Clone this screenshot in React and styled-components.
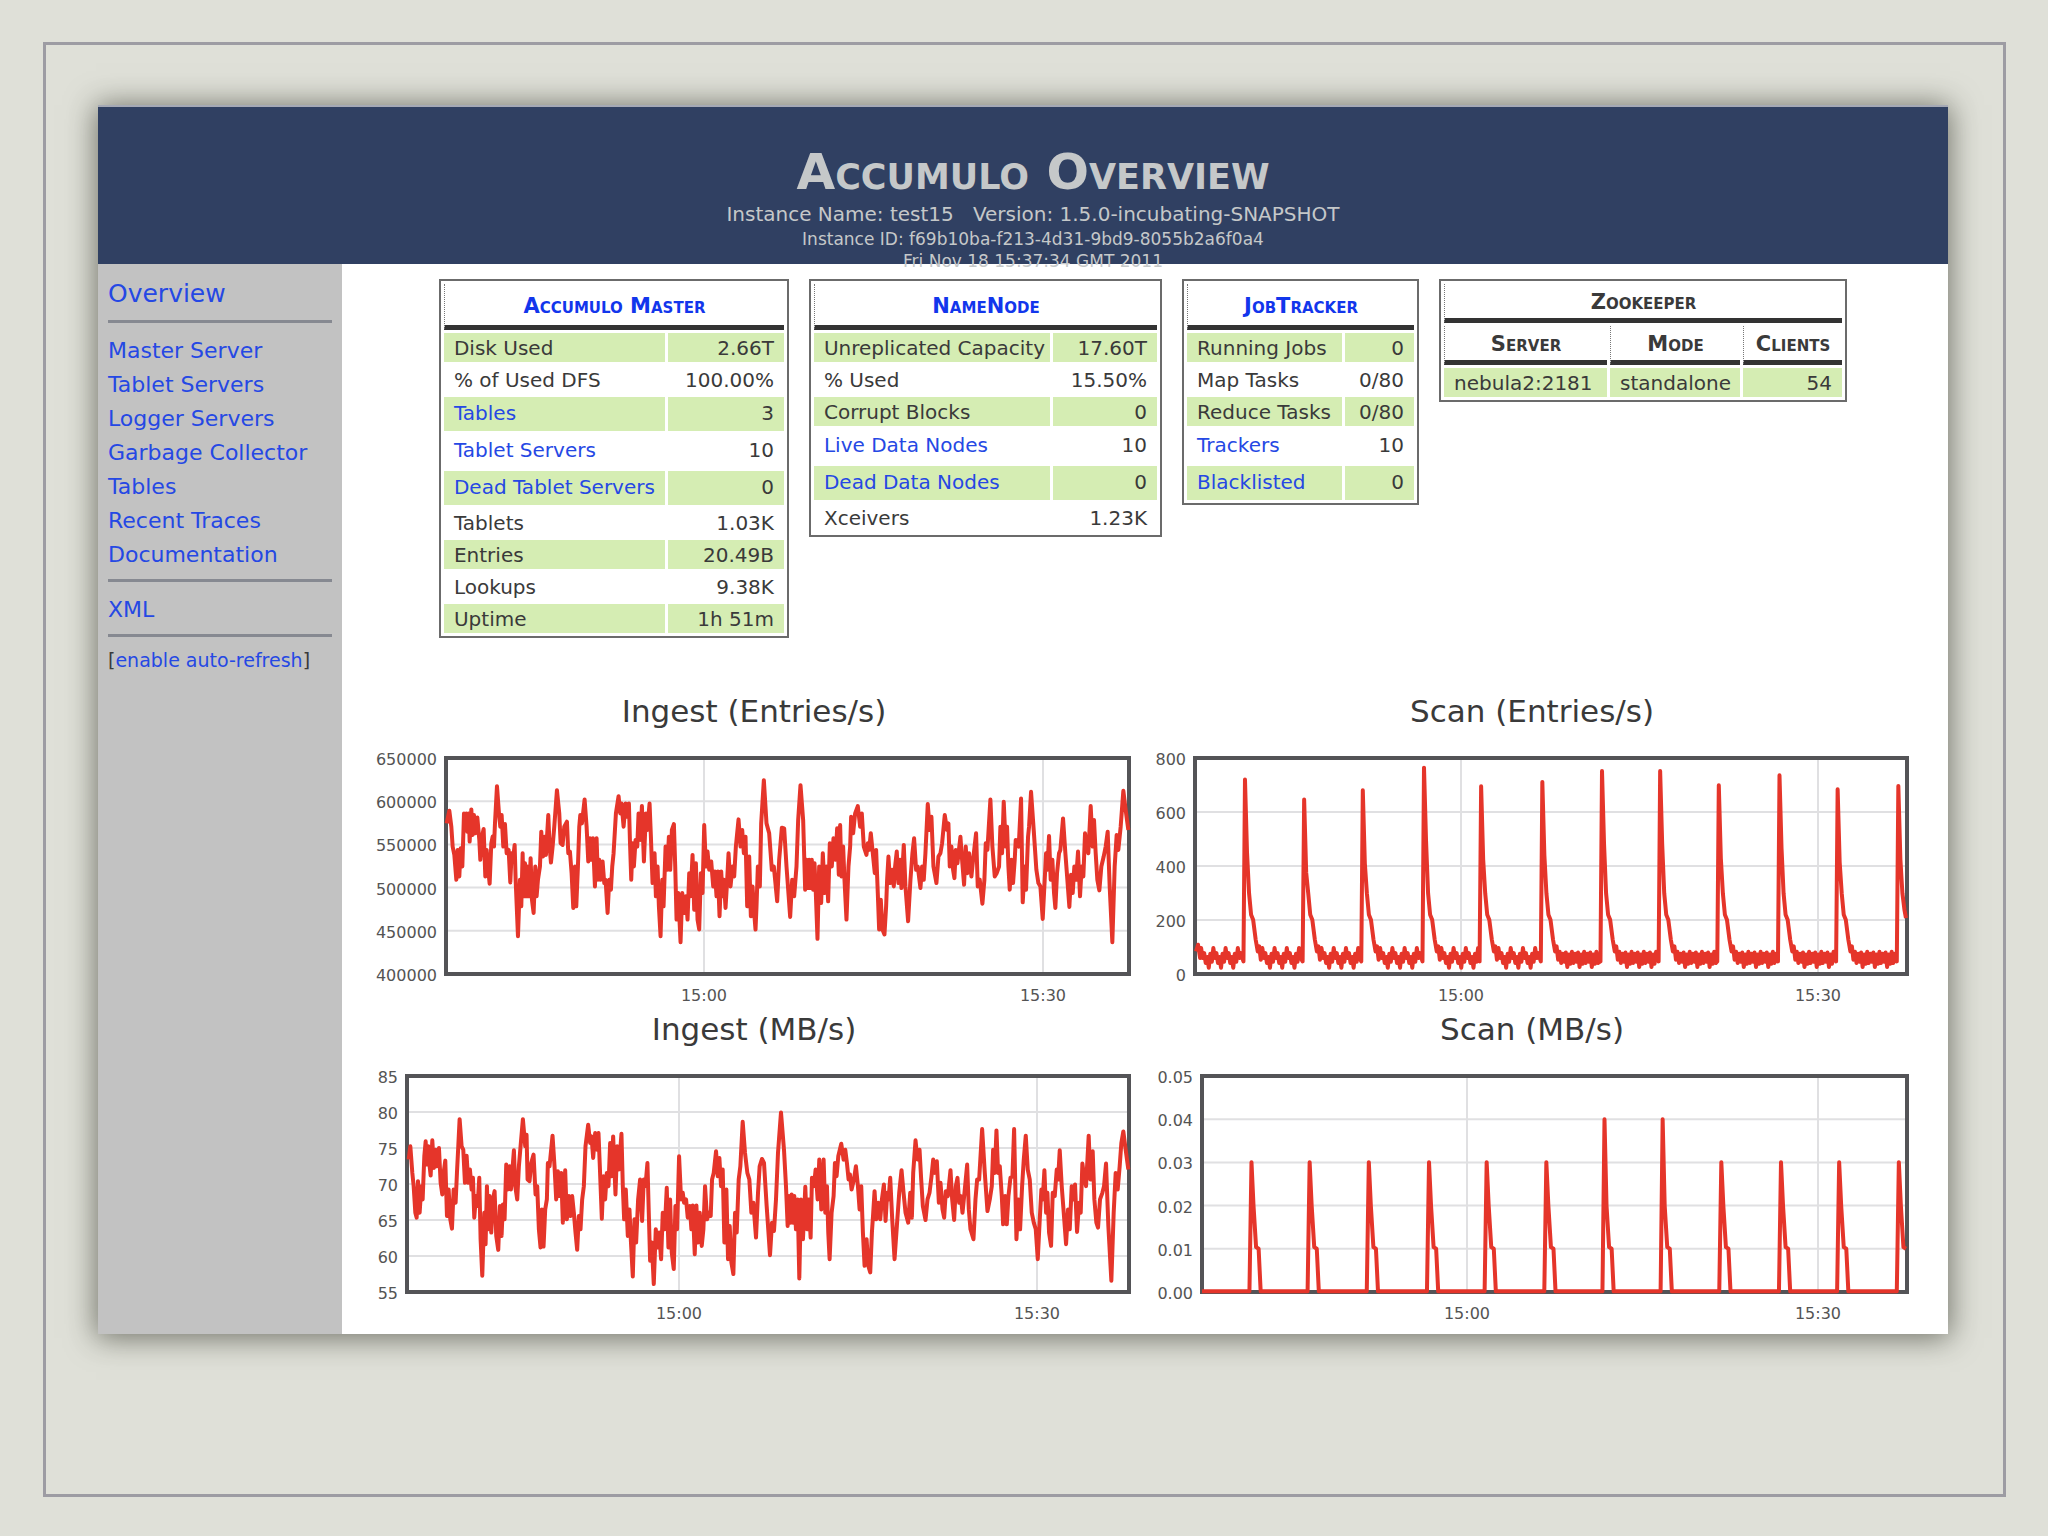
import React from "react";
import styled, { createGlobalStyle } from "styled-components";

const GlobalStyle = createGlobalStyle`
  * {
    box-sizing: border-box;
  }

  body {
    margin: 0;
    background: #dfe0d8;
    color: #3a3a3a;
    font-family: "DejaVu Sans", Verdana, sans-serif;
  }

  a {
    color: #2548e4;
    text-decoration: none;
  }
`;

const navLinks = [
  "Master Server",
  "Tablet Servers",
  "Logger Servers",
  "Garbage Collector",
  "Tables",
  "Recent Traces",
  "Documentation",
];

const summaries = [
  {
    title: "Accumulo Master",
    labelWidth: 221,
    valueWidth: 116,
    rows: [
      { label: "Disk Used", value: "2.66T" },
      { label: "% of Used DFS", value: "100.00%" },
      { label: "Tables", value: "3", link: true },
      { label: "Tablet Servers", value: "10", link: true },
      { label: "Dead Tablet Servers", value: "0", link: true },
      { label: "Tablets", value: "1.03K" },
      { label: "Entries", value: "20.49B" },
      { label: "Lookups", value: "9.38K" },
      { label: "Uptime", value: "1h 51m" },
    ],
  },
  {
    title: "NameNode",
    labelWidth: 236,
    valueWidth: 104,
    rows: [
      { label: "Unreplicated Capacity", value: "17.60T" },
      { label: "% Used", value: "15.50%" },
      { label: "Corrupt Blocks", value: "0" },
      { label: "Live Data Nodes", value: "10", link: true },
      { label: "Dead Data Nodes", value: "0", link: true },
      { label: "Xceivers", value: "1.23K" },
    ],
  },
  {
    title: "JobTracker",
    labelWidth: 155,
    valueWidth: 69,
    rows: [
      { label: "Running Jobs", value: "0" },
      { label: "Map Tasks", value: "0/80" },
      { label: "Reduce Tasks", value: "0/80" },
      { label: "Trackers", value: "10", link: true },
      { label: "Blacklisted", value: "0", link: true },
    ],
  },
];

// the ingest series come in two halves, the second one starts at HALF
const HALF = 1170;

const join = (first, second) => {
  const shifted = second
    .trim()
    .split(/\s+/)
    .map((p) => {
      const [x, y] = p.split(",").map(Number);
      return `${x + HALF},${y}`;
    });
  return `${first.trim()} ${shifted.join(" ")}`;
};

const ingestEntries = join(
  `260,430 268,392 274,440 278,500 283,525 289,600 293,510 298,590 302,505 307,560 312,400 315,450
  319,400 322,455 326,400 329,485 334,388 338,465 342,405 346,460 352,412 358,480 361,540 366,470
  371,447 376,590 380,510 384,560 389,612 394,490 398,470 402,500 405,430 411,318 417,400 421,440
  425,405 430,500 435,432 440,520 446,510 451,608 455,520 459,540 464,495 467,600 474,770 480,600
  484,680 488,520 491,650 495,550 499,650 503,560 507,650 512,535 516,660 521,700 526,560 530,650 534,600
  540,560 544,455 549,530 554,470 558,525 565,405 569,500 573,548 578,500 583,440 591,330 598,400
  602,490 608,495 613,440 621,425 625,520 630,515 635,580 640,685 645,560 649,680 654,560 658,440
  661,405 666,430 674,358 680,440 685,545 690,475 694,540 699,475 705,620 710,475 714,600 718,540
  722,600 728,545 733,610 737,600 743,700 748,600 753,630 757,560 761,520 768,400 776,348 781,400
  785,370 791,440 797,370 801,410 807,370 810,480 814,600 818,490 822,560 827,480 832,500 836,400
  841,480 846,378 849,460 852,545 858,400 862,450 869,370 873,470 878,610 884,520 888,650 893,560 897,680
  902,770 907,600 911,680 917,500 922,570 927,470 931,570 936,450 942,432 946,560 950,720 955,640
  962,788 967,640 973,700 978,650 983,720 988,580 992,650 998,525 1003,690 1008,550 1013,720 1018,750
  1023,580 1028,640 1033,435 1038,560 1043,515 1048,570 1054,545 1060,620 1065,575 1070,650 1074,575
  1079,710 1084,575 1088,650 1092,600 1097,685 1102,600 1106,520 1112,620 1118,560 1123,590 1128,500
  1136,418 1142,500 1147,450 1152,520 1157,470 1162,680 1168,530 1173,710 1178,620 1183,700 1187,750`,
  `20,680 24,560 30,620 34,430 42,300 50,430 58,460 66,570 72,560 82,665 88,540 96,443 103,445 110,560
  121,712 127,600 133,650 140,560 145,420 152,315 160,420 166,630 170,540 174,625 178,540 182,625
  186,540 190,630 194,550 198,640 203,778 208,560 214,670 219,520 225,640 230,560 235,665 240,490
  246,560 251,475 257,540 262,445 267,585 271,435 275,590 280,500 284,600 290,720 296,560 301,500
  304,410 310,460 316,400 324,378 331,440 336,400 342,500 350,525 354,490 358,510 363,460 369,520
  375,580 379,510 384,640 388,750 393,660 398,750 404,765 409,680 412,600 416,530 421,610 427,570
  432,620 436,560 441,515 446,610 451,540 455,625 462,495 467,620 475,725 482,600 488,520 493,475
  499,570 504,560 512,625 517,560 522,600 527,520 534,372 540,450 545,410 551,560 560,610 566,530
  572,520 577,490 585,405 592,450 596,430 600,560 605,500 610,570 614,595 618,510 623,550 632,470
  637,540 643,615 648,500 653,580 658,520 665,590 670,540 679,460 684,620 690,600 698,672 704,600
  708,490 713,510 722,358 728,500 735,590 741,580 748,560 752,440 757,520 762,365 768,500 772,440
  776,560 780,630 785,540 790,610 795,540 798,480 803,490 807,500 814,355 819,668 825,560 829,630
  835,470 838,440 844,335 852,450 860,570 866,610 872,620 879,718 885,600 889,520 893,570 898,468
  903,600 908,540 913,640 917,685 922,580 928,520 932,510 940,415 947,520 953,600 959,682 964,585
  969,640 974,560 979,600 985,515 991,650 996,560 1001,590 1006,460 1011,500 1016,520 1023,378
  1029,500 1033,420 1038,520 1043,600 1049,632 1055,560 1062,530 1068,500 1074,455 1080,620 1088,788
  1095,560 1101,465 1106,510 1113,440 1121,332 1128,390 1136,450`
);

const ingestMb = join(
  `145,480 150,440 156,520 160,560 165,640 169,655 173,545 178,640 183,560 187,600 192,470 196,425
  200,495 204,440 208,500 211,528 216,422 221,505 226,450 230,500 236,445 241,550 246,585 250,520
  255,483 260,650 265,570 270,660 275,688 280,570 286,610 290,520 294,440 298,358 304,440 309,450
  314,550 319,468 324,550 329,510 334,570 338,535 342,655 347,590 352,620 357,535 361,720 366,830
  372,640 376,735 380,560 384,690 388,590 393,700 398,600 403,575 408,710 414,752 419,620 424,710
  428,615 433,660 438,495 443,570 448,500 452,570 461,452 465,560 471,600 476,500 481,440 488,358
  495,440 499,405 502,540 508,545 513,490 520,465 526,585 531,560 536,690 541,745 545,630 550,742
  555,630 560,600 563,490 568,500 577,408 583,500 588,600 593,515 598,590 603,520 608,670 615,512
  620,660 626,590 631,650 636,590 641,640 646,700 651,752 656,650 661,690 666,600 671,560 676,440
  684,375 690,430 694,410 699,475 705,400 710,450 715,400 719,500 725,658 730,530 735,600 740,520
  745,560 750,430 754,530 759,410 766,585 771,440 776,510 784,402 788,560 792,660 797,570 803,710
  808,630 812,720 818,832 823,660 828,730 834,600 840,540 846,665 851,540 856,560 862,490 866,640
  870,785 875,730 881,855 887,690 892,745 897,700 903,780 908,640 914,690 920,565 925,745 930,600
  935,760 941,810 946,620 951,690 957,470 963,600 968,580 972,610 978,600 983,655 989,620 994,690
  998,618 1004,765 1009,618 1014,730 1019,640 1025,740 1030,690 1035,560 1041,660 1047,640 1052,650
  1056,540 1061,520 1068,455 1073,530 1078,475 1083,560 1088,510 1093,730 1099,570 1104,780 1109,680
  1114,790 1120,825 1125,640 1130,700 1136,540 1141,500 1148,366 1155,460 1162,520 1168,540`,
  `4,640 10,610 18,715 24,580 29,500 36,478 42,490 50,620 60,768 66,670 72,695 78,600 84,460 93,338
  102,450 108,560 113,680 117,590 121,670 125,585 129,670 133,590 138,690 143,600 148,838 153,600
  159,720 166,562 171,690 176,600 182,715 186,535 192,560 197,510 203,600 208,480 214,630 221,480
  226,640 231,560 235,700 239,780 245,640 251,590 255,490 260,530 265,470 274,432 281,480 286,450
  291,490 296,540 300,525 305,570 312,540 318,500 324,560 329,630 334,560 339,700 344,800 350,720
  355,800 361,820 366,700 370,640 374,575 379,660 385,610 391,660 396,600 402,555 407,665 412,580
  416,600 421,535 427,660 434,780 441,680 448,580 455,512 461,580 467,640 475,670 481,580 486,655
  490,520 497,422 503,480 509,450 514,540 519,620 527,662 533,600 539,580 545,530 550,480 555,520
  561,485 567,610 572,550 578,630 583,655 588,575 594,590 602,512 607,600 613,662 618,560 623,535
  628,610 633,590 638,640 644,580 652,495 657,630 662,690 671,720 677,600 682,540 688,540 697,388
  705,520 713,635 720,600 726,560 730,450 735,520 740,392 745,520 750,500 756,590 760,675 766,590
  771,675 776,590 782,535 788,530 793,388 800,720 806,600 811,690 817,560 822,480 828,408 834,510
  840,540 846,640 852,670 858,690 864,780 870,660 875,570 879,600 884,512 889,640 893,580 898,700
  904,740 909,580 915,590 921,510 925,540 930,452 936,560 942,640 949,735 955,630 960,690 966,560
  971,600 976,555 982,698 988,610 993,640 998,492 1003,530 1009,560 1017,408 1022,540 1029,455
  1034,600 1040,670 1045,685 1051,600 1058,580 1063,560 1069,492 1076,680 1085,845 1092,640 1098,520
  1104,570 1110,500 1115,430 1121,395 1128,450 1136,510`
);

// idle scans ripple near zero, then every burst jumps up and decays
const buildScanEntries = () => {
  const peaks = [
    [206, 298], [322, 358], [437, 330], [557, 262], [669, 318], [789, 305],
    [906, 272], [1020, 272], [1135, 315], [1254, 285], [1368, 327], [1487, 317],
  ];
  const early = [805, 835, 820, 850, 832, 864, 822, 846];
  const late = [816, 850, 822, 846, 818, 862, 824, 852];
  const points = ["110,815", "114,795", "118,835"];
  let x = 120;
  peaks.forEach(([px, py], i) => {
    const ripple = i > 5 ? late : early;
    for (let n = 0; x < px - 5; n++, x += 3) {
      points.push(`${x},${ripple[n % ripple.length]}`);
    }
    points.push(`${px - 3},845`, `${px},${py}`, `${px + 4},${py + 220}`, `${px + 8},640`);
    if (px < 1480) {
      points.push(`${px + 12},705`, `${px + 16},720`, `${px + 21},780`);
      points.push(`${px + 25},815`, `${px + 28},800`, `${px + 31},840`);
    } else {
      points.push("1499,690", "1502,715");
    }
    x = px + 34;
  });
  return points.join(" ");
};

const buildScanMb = () => {
  const bursts = [219, 333, 449, 567, 680, 797, 911, 1025, 1140, 1257, 1371, 1488];
  const points = ["122,875"];
  bursts.forEach((x) => {
    const top = x === 911 || x === 1025 ? 358 : 487;
    points.push(`${x - 4},875`, `${x},${top}`, `${x + 4},618`, `${x + 9},742`);
    if (x < 1480) {
      points.push(`${x + 14},747`, `${x + 18},875`);
    } else {
      points.push("1502,747");
    }
  });
  return points.join(" ");
};

const charts = [
  {
    title: "Ingest (Entries/s)",
    left: 70,
    yLabels: ["650000", "600000", "550000", "500000", "450000", "400000"],
    xLabels: [[328, "15:00"], [667, "15:30"]],
    domain: "258 233 2050 651",
    points: ingestEntries,
  },
  {
    title: "Scan (Entries/s)",
    left: 41,
    yLabels: ["800", "600", "400", "200", "0"],
    xLabels: [[307, "15:00"], [664, "15:30"]],
    domain: "108 233 1396 650",
    points: buildScanEntries(),
  },
  {
    title: "Ingest (MB/s)",
    left: 31,
    yLabels: ["85", "80", "75", "70", "65", "60", "55"],
    xLabels: [[303, "15:00"], [661, "15:30"]],
    domain: "140 228 2168 651",
    points: ingestMb,
  },
  {
    title: "Scan (MB/s)",
    left: 48,
    yLabels: ["0.05", "0.04", "0.03", "0.02", "0.01", "0.00"],
    xLabels: [[313, "15:00"], [664, "15:30"]],
    domain: "122 228 1382 649",
    points: buildScanMb(),
  },
];

const SummaryTable = ({ title, rows, labelWidth, valueWidth }) => (
  <Table>
    <thead>
      <tr>
        <HeadCell colSpan={2} $tall>
          <HeadLink href="#">{title}</HeadLink>
        </HeadCell>
      </tr>
    </thead>
    <tbody>
      {rows.map((row) => (
        <Row key={row.label} $tall={row.link}>
          <Cell $width={labelWidth}>{row.link ? <a href="#">{row.label}</a> : row.label}</Cell>
          <Cell $width={valueWidth} $right>
            {row.value}
          </Cell>
        </Row>
      ))}
    </tbody>
  </Table>
);

const Zookeeper = () => (
  <Table>
    <thead>
      <tr>
        <HeadCell colSpan={3}>Zookeeper</HeadCell>
      </tr>
      <tr>
        <HeadCell>Server</HeadCell>
        <HeadCell>Mode</HeadCell>
        <HeadCell>Clients</HeadCell>
      </tr>
    </thead>
    <tbody>
      <Row>
        <Cell $width={163}>nebula2:2181</Cell>
        <Cell $width={130}>standalone</Cell>
        <Cell $width={99} $right>
          54
        </Cell>
      </Row>
    </tbody>
  </Table>
);

const TOP = 13;
const BOTTOM = 229;
const RIGHT = 753;

const Chart = ({ title, left, yLabels, xLabels, domain, points }) => {
  const step = (BOTTOM - TOP) / (yLabels.length - 1);
  return (
    <Figure>
      <ChartTitle>{title}</ChartTitle>
      <Plot viewBox="0 0 756 262" role="img" aria-label={title}>
        {yLabels.map((label, i) => (
          <g key={label}>
            <line className="grid" x1={left} x2={RIGHT} y1={TOP + i * step} y2={TOP + i * step} />
            <text x={left - 9} y={TOP + i * step + 7} textAnchor="end">
              {label}
            </text>
          </g>
        ))}
        {xLabels.map(([x, label]) => (
          <g key={label}>
            <line className="grid" x1={x} x2={x} y1={TOP} y2={BOTTOM} />
            <text x={x} y={256} textAnchor="middle">
              {label}
            </text>
          </g>
        ))}
        <rect className="frame" x={left} y={TOP} width={RIGHT - left} height={BOTTOM - TOP} />
        <svg
          x={left}
          y={TOP}
          width={RIGHT - left}
          height={BOTTOM - TOP}
          viewBox={domain}
          preserveAspectRatio="none"
          overflow="visible"
        >
          <polyline className="series" points={points} />
        </svg>
      </Plot>
    </Figure>
  );
};

const App = () => {
  return (
    <Page>
      <GlobalStyle />
      <Frame>
        <Monitor>
          <Header>
            <Title>Accumulo Overview</Title>
            <Instance>Instance Name: test15&nbsp;&nbsp; Version: 1.5.0-incubating-SNAPSHOT</Instance>
            <Detail>Instance ID: f69b10ba-f213-4d31-9bd9-8055b2a6f0a4</Detail>
            <Detail>Fri Nov 18 15:37:34 GMT 2011</Detail>
          </Header>
          <Body>
            <Sidebar>
              <Current href="#">Overview</Current>
              <Rule />
              <NavList>
                {navLinks.map((name) => (
                  <li key={name}>
                    <a href="#">{name}</a>
                  </li>
                ))}
              </NavList>
              <Rule />
              <NavList>
                <li>
                  <a href="#">XML</a>
                </li>
              </NavList>
              <Rule />
              <Refresh>
                [<a href="#">enable auto-refresh</a>]
              </Refresh>
            </Sidebar>
            <Main>
              <Tables>
                {summaries.map((s) => (
                  <SummaryTable key={s.title} {...s} />
                ))}
                <Zookeeper />
              </Tables>
              <Charts>
                {charts.map((c) => (
                  <Chart key={c.title} {...c} />
                ))}
              </Charts>
            </Main>
          </Body>
        </Monitor>
      </Frame>
    </Page>
  );
};

export default App;

const Page = styled.div`
  display: flex;
  min-height: 100vh;
  padding: 42px 42px 39px 43px;
`;

const Frame = styled.div`
  flex: 1;
  min-width: 0;
  padding: 60px 55px 60px 52px;
  border: 3px solid #9d9ca3;
`;

const Monitor = styled.div`
  border-top: 2px solid #a5a9b5;
  background: #fff;
  box-shadow: 0 2px 28px 2px rgba(40, 42, 30, 0.6);
`;

/* the date line runs a little over the lower edge */
const Header = styled.header`
  height: 157px;
  padding: 37px 0 0 20px;
  background: #304062;
  color: #c5c8c9;
  text-align: center;
`;

const Title = styled.h1`
  margin: 0;
  font-size: 50px;
  line-height: 56px;
  font-variant: small-caps;
`;

const Instance = styled.div`
  font-size: 20px;
  line-height: 28px;
`;

const Detail = styled.div`
  font-size: 17px;
  line-height: 22px;
`;

const Body = styled.div`
  display: grid;
  grid-template-columns: 244px minmax(0, 1fr);
`;

const Sidebar = styled.nav`
  padding: 11px 10px 0;
  background: #c2c2c2;
`;

const Current = styled.a`
  display: block;
  font-size: 25px;
  line-height: 38px;
`;

const Rule = styled.hr`
  height: 3px;
  margin: 7px 0 11px;
  border: 0;
  background: #868991;
`;

const NavList = styled.ul`
  margin: 0;
  padding: 0;
  list-style: none;
  font-size: 22px;
  line-height: 34px;
`;

const Refresh = styled.div`
  font-size: 19px;
  line-height: 24px;
  white-space: nowrap;
`;

const Main = styled.main`
  padding: 15px 38px 9px 34px;
`;

const Tables = styled.div`
  display: flex;
  justify-content: center;
  align-items: flex-start;
  gap: 20px;
`;

const Table = styled.table`
  border: 2px solid #6b6b6b;
  border-spacing: 3px;
  font-size: 20px;
`;

const HeadCell = styled.th`
  height: ${(props) => (props.$tall ? 46 : 39)}px;
  padding: 2px 8px 0;
  border-left: 1px dotted #777;
  border-bottom: 5px solid #333;
  font-size: 21px;
  line-height: 24px;
  font-variant: small-caps;
`;

const HeadLink = styled.a`
  color: #1236ec;
`;

const Cell = styled.td`
  width: ${(props) => props.$width}px;
  padding: ${(props) => (props.$right ? "0 10px 0 5px" : "0 5px 0 10px")};
  line-height: 24px;
  text-align: ${(props) => (props.$right ? "right" : "left")};
  white-space: nowrap;
`;

const Row = styled.tr`
  height: ${(props) => (props.$tall ? 34 : 29)}px;

  ${Cell} {
    padding-bottom: ${(props) => (props.$tall ? 2 : 0)}px;
  }

  &:nth-child(odd) ${Cell} {
    background: #d5edb3;
  }
`;

const Charts = styled.section`
  display: grid;
  grid-template-columns: repeat(2, minmax(0, 1fr));
  column-gap: 22px;
  margin-top: 51px;
`;

const Figure = styled.figure`
  margin: 0;
`;

const ChartTitle = styled.figcaption`
  padding-bottom: 12px;
  font-size: 31px;
  line-height: 44px;
  text-align: center;
`;

const Plot = styled.svg`
  display: block;
  width: 100%;
  height: auto;

  text {
    fill: #545454;
    font-size: 16px;
  }

  .grid {
    stroke: #e0e0e2;
    stroke-width: 2;
  }

  .frame {
    fill: none;
    stroke: #545457;
    stroke-width: 4;
  }

  .series {
    fill: none;
    stroke: #e5352a;
    stroke-width: 4;
    stroke-linejoin: round;
    vector-effect: non-scaling-stroke;
  }
`;
